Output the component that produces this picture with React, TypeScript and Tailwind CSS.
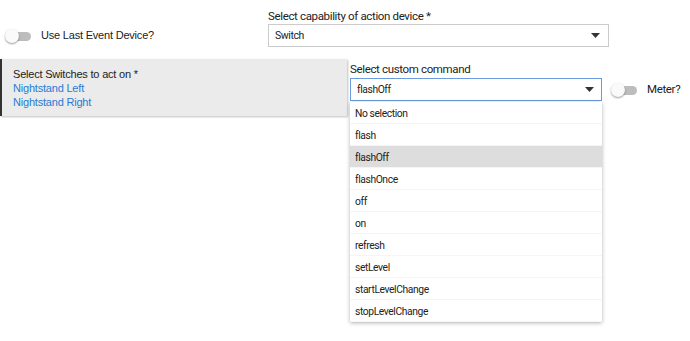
import React from "react";

const commands = [
  "No selection",
  "flash",
  "flashOff",
  "flashOnce",
  "off",
  "on",
  "refresh",
  "setLevel",
  "startLevelChange",
  "stopLevelChange",
];

function Toggle() {
  return (
    <div className="relative h-[14px] w-[26px]">
      <div className="absolute left-[3px] top-[3px] h-[9px] w-[23px] rounded-full bg-[#bdbdbd]" />
      <div className="absolute left-0 top-0 h-[14px] w-[14px] rounded-full bg-[#fafafa] shadow-[0_1px_2px_rgba(0,0,0,0.4)]" />
    </div>
  );
}

function Caret() {
  return (
    <svg width="9" height="5" viewBox="0 0 9 5">
      <path d="M0 0h9L4.5 5z" fill="#333" />
    </svg>
  );
}

export default function App() {
  return (
    <div className="w-[690px] h-[341px] bg-white font-['Roboto',sans-serif] text-[11.5px] tracking-[-0.35px] text-[#222]">
      <div className="flex items-end pt-[10px]">
        <div className="flex h-[23px] w-[268px] items-center pl-[5px]">
          <Toggle />
          <span className="ml-[10px] font-['Liberation_Sans',sans-serif] text-[11px] tracking-[-0.2px]">Use Last Event Device?</span>
        </div>
        <div className="flex flex-col">
          <span className="mb-[1px] leading-[13px]">Select capability of action device *</span>
          <div className="flex h-[23px] w-[341px] items-center justify-between border border-[#ccc] pl-[6px] pr-[8px] text-[10.5px] tracking-[-0.4px]">
            <span className="pt-[1px]">Switch</span>
            <Caret />
          </div>
        </div>
      </div>

      <div className="mt-[12px] flex">
        <div className="h-[57px] w-[347px] border-l-2 border-[#333] bg-[#ebebeb] pl-[11px] pt-[8px] font-['Liberation_Sans',sans-serif] text-[11px] leading-[14px] tracking-[-0.2px] shadow-[1px_1px_2px_rgba(0,0,0,0.25)]">
          <div>Select Switches to act on *</div>
          <div className="text-[#2a7ad4]">Nightstand Left</div>
          <div className="text-[#2a7ad4]">Nightstand Right</div>
        </div>
        <div className="relative ml-[3px] flex flex-col pt-[4px]">
          <span className="mb-[2px] leading-[13px]">Select custom command</span>
          <div className="flex h-[23px] w-[252px] items-center justify-between border border-[#6b9be0] pl-[6px] pr-[7px] text-[10.3px] tracking-[-0.4px]">
            <span className="pt-[1px]">flashOff</span>
            <Caret />
          </div>
          <div className="absolute left-0 top-[43px] w-[252px] bg-white shadow-[0_1px_4px_rgba(0,0,0,0.3)]">
            {commands.map((c) => (
              <div
                key={c}
                className={
                  "flex h-[22px] items-center border-b border-[#f5f5f5] px-[5px] pt-[2px] text-[10.3px] tracking-[-0.4px] " +
                  (c === "flashOff" ? "bg-[#dddddd]" : "")
                }
              >
                {c}
              </div>
            ))}
          </div>
        </div>
        <div className="ml-[9px] mt-[19px] flex h-[23px] items-center self-start">
          <Toggle />
          <span className="ml-[10px]">Meter?</span>
        </div>
      </div>
    </div>
  );
}
